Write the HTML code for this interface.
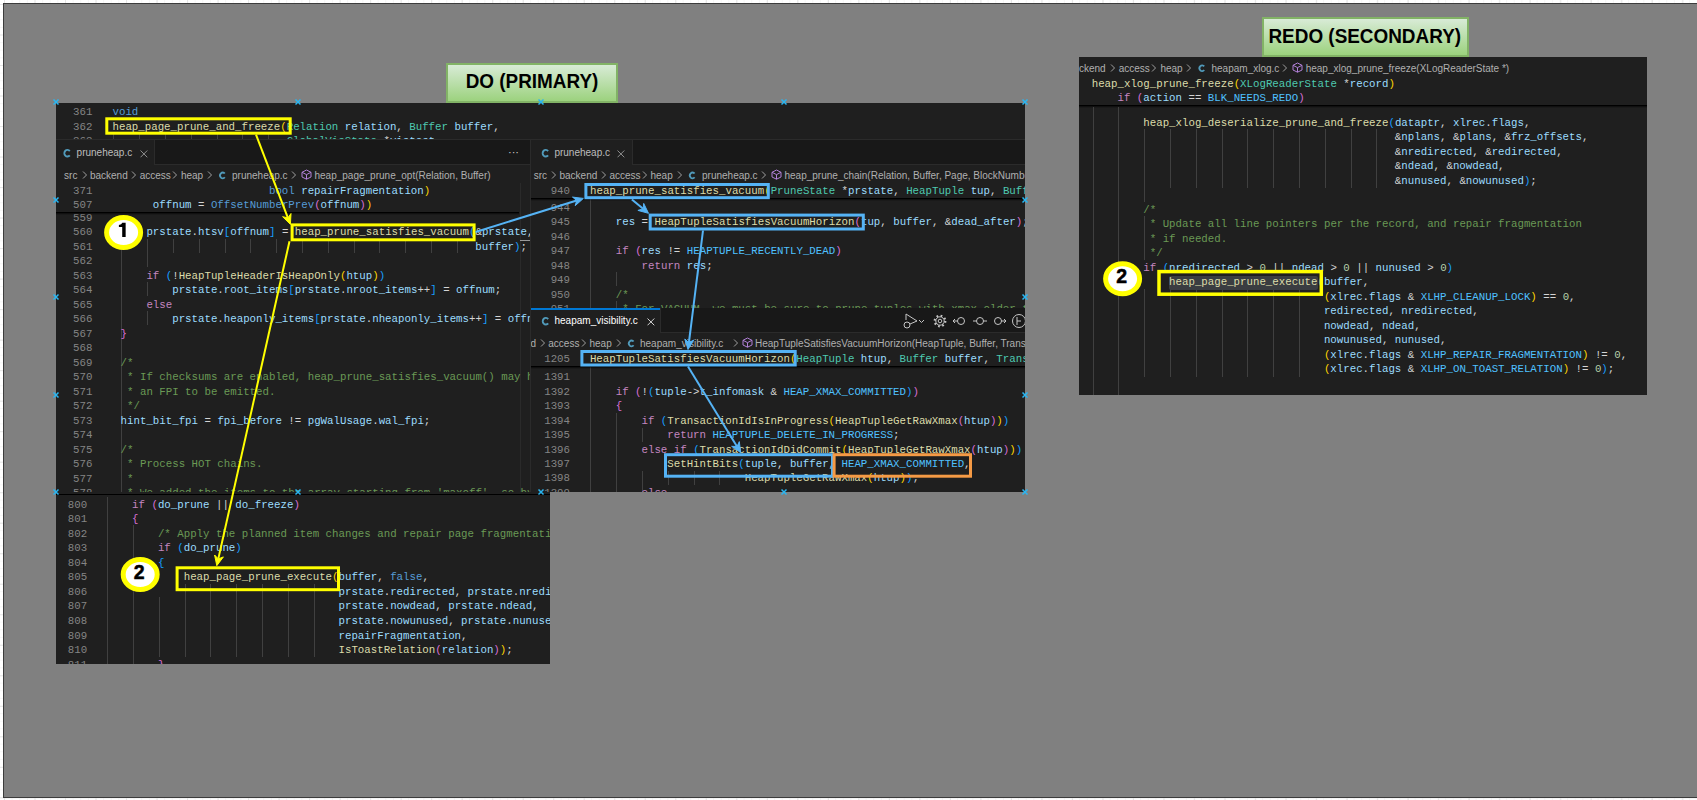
<!DOCTYPE html>
<html><head><meta charset="utf-8"><style>
html,body{margin:0;padding:0;}
body{width:1697px;height:800px;position:relative;overflow:hidden;background-color:#fff;
background-image:linear-gradient(#e6e6e6 1px, transparent 1px),linear-gradient(90deg,#e6e6e6 1px, transparent 1px),linear-gradient(#f6f6f6 1px, transparent 1px),linear-gradient(90deg,#f6f6f6 1px, transparent 1px);
background-size:30.53px 30.53px,30.53px 30.53px,7.63px 7.63px,7.63px 7.63px;background-position:4px 4px,4px 4px,4px 4px,4px 4px;}
.bg{position:absolute;left:3px;top:3px;width:1700px;height:795px;background:#808080;border:1px solid #3c3c3c;box-sizing:border-box;}
.pn{position:absolute;overflow:hidden;}
.cl{position:absolute;white-space:pre;font-family:"Liberation Mono",monospace;font-size:10.75px;line-height:14.5px;height:14.5px;color:#d4d4d4;}
.ln{position:absolute;white-space:pre;font-family:"Liberation Mono",monospace;font-size:10.75px;line-height:14.5px;height:14.5px;color:#858585;text-align:right;}
.ig{position:absolute;width:1px;background:#404040;}
.tx{position:absolute;white-space:pre;font-family:"Liberation Sans",sans-serif;}
.lbl span{display:inline-block;white-space:pre;}
.lbl{position:absolute;box-sizing:border-box;border:2.2px solid #82b366;background:linear-gradient(#d8eBd6,#9cd27e);font-family:"Liberation Sans",sans-serif;font-weight:bold;font-size:19.4px;color:#000;display:flex;align-items:center;justify-content:center;}
svg.ov{position:absolute;left:0;top:0;}
</style></head><body>
<div class="bg"></div>

<div class="lbl" style="left:445.6px;top:63.1px;width:172.5px;height:40.4px"><span style="transform:translateY(-2.1px) scaleX(0.975)">DO (PRIMARY)</span></div>
<div class="lbl" style="left:1261.6px;top:17.3px;width:207.2px;height:39.6px"><span style="transform:translateY(-1.0px) scaleX(0.975)">REDO (SECONDARY)</span></div>

<div class="pn" style="left:56.00px;top:103.00px;width:969.00px;height:37.00px;background:#1f1f1f;">
<div class="ig" style="left:57.30px;top:30.50px;height:6.50px"></div>
<div class="ig" style="left:83.10px;top:30.50px;height:6.50px"></div>
<div class="ig" style="left:108.90px;top:30.50px;height:6.50px"></div>
<div class="ig" style="left:134.70px;top:30.50px;height:6.50px"></div>
<div class="ig" style="left:160.50px;top:30.50px;height:6.50px"></div>
<div class="ig" style="left:186.30px;top:30.50px;height:6.50px"></div>
<div class="ig" style="left:212.10px;top:30.50px;height:6.50px"></div>
<div class="ln" style="left:-3.60px;top:2.25px;width:40px">361</div>
<div class="cl" style="left:56.50px;top:2.25px"><span style="color:#569cd6">void</span></div>
<div class="ln" style="left:-3.60px;top:16.75px;width:40px">362</div>
<div class="cl" style="left:56.50px;top:16.75px"><span style="color:#dcdcaa">heap_page_prune_and_freeze</span><span style="color:#ffd700">(</span><span style="color:#4ec9b0">Relation</span> <span style="color:#9cdcfe">relation</span><span style="color:#d4d4d4">,</span> <span style="color:#4ec9b0">Buffer</span> <span style="color:#9cdcfe">buffer</span><span style="color:#d4d4d4">,</span></div>
<div class="ln" style="left:-3.60px;top:31.25px;width:40px">363</div>
<div class="cl" style="left:230.65px;top:31.25px"><span style="color:#4ec9b0">GlobalVisState</span> <span style="color:#d4d4d4">*</span><span style="color:#9cdcfe">vistest</span><span style="color:#d4d4d4">,</span></div>
<div style="position:absolute;left:0.00px;top:36.00px;width:969.00px;height:1.00px;background:#2b2b2b"></div>
</div>
<div class="pn" style="left:56.00px;top:140.00px;width:474.00px;height:352.00px;background:#1f1f1f;">
<div style="position:absolute;left:0.00px;top:0.00px;width:474.00px;height:25.00px;background:#181818"></div>
<div style="position:absolute;left:0.00px;top:0.00px;width:98.00px;height:25.00px;background:#1f1f1f"></div>
<div style="position:absolute;left:98.00px;top:24.00px;width:376.00px;height:1.00px;background:#2b2b2b"></div>
<div style="position:absolute;left:98.00px;top:0.00px;width:1.00px;height:25.00px;background:#2b2b2b"></div>
<svg style="position:absolute;left:0;top:0;overflow:visible" width="1" height="1"><path d="M13.79 11.05 A3.08 3.35 0 1 0 13.79 15.35" fill="none" stroke="#519aba" stroke-width="1.90"/></svg>
<div class="tx" style="left:20.60px;top:5.80px;height:14px;line-height:14px;color:#bdbdbd;font-size:10px">pruneheap.c</div>
<svg style="position:absolute;left:83.90px;top:9.50px" width="8" height="8" viewBox="0 0 8 8"><path d="M0.5 0.5 L7.3 7.3 M7.3 0.5 L0.5 7.3" stroke="#9a9a9a" stroke-width="0.9"/></svg>
<div class="tx" style="left:452.00px;top:5.00px;height:14px;line-height:14px;color:#cccccc;font-size:11px;letter-spacing:0px">&middot;&middot;&middot;</div>
<div class="tx" style="left:8.10px;top:29.20px;height:14px;line-height:14px;color:#b0b0b0;font-size:10px">src</div>
<svg style="position:absolute;left:25.50px;top:29.90px" width="6" height="10" viewBox="0 0 6 10"><polyline points="1,1.5 4.5,5 1,8.5" fill="none" stroke="#a0a0a0" stroke-width="1"/></svg>
<div class="tx" style="left:33.90px;top:29.20px;height:14px;line-height:14px;color:#b0b0b0;font-size:10px">backend</div>
<svg style="position:absolute;left:74.70px;top:29.90px" width="6" height="10" viewBox="0 0 6 10"><polyline points="1,1.5 4.5,5 1,8.5" fill="none" stroke="#a0a0a0" stroke-width="1"/></svg>
<div class="tx" style="left:83.70px;top:29.20px;height:14px;line-height:14px;color:#b0b0b0;font-size:10px">access</div>
<svg style="position:absolute;left:116.30px;top:29.90px" width="6" height="10" viewBox="0 0 6 10"><polyline points="1,1.5 4.5,5 1,8.5" fill="none" stroke="#a0a0a0" stroke-width="1"/></svg>
<div class="tx" style="left:124.90px;top:29.20px;height:14px;line-height:14px;color:#b0b0b0;font-size:10px">heap</div>
<svg style="position:absolute;left:151.40px;top:29.90px" width="6" height="10" viewBox="0 0 6 10"><polyline points="1,1.5 4.5,5 1,8.5" fill="none" stroke="#a0a0a0" stroke-width="1"/></svg>
<svg style="position:absolute;left:0;top:0;overflow:visible" width="1" height="1"><path d="M168.81 33.54 A2.67 2.90 0 1 0 168.81 37.26" fill="none" stroke="#519aba" stroke-width="1.80"/></svg>
<div class="tx" style="left:176.00px;top:29.20px;height:14px;line-height:14px;color:#b0b0b0;font-size:10px">pruneheap.c</div>
<svg style="position:absolute;left:235.00px;top:29.90px" width="6" height="10" viewBox="0 0 6 10"><polyline points="1,1.5 4.5,5 1,8.5" fill="none" stroke="#a0a0a0" stroke-width="1"/></svg>
<svg style="position:absolute;left:245.00px;top:29.20px" width="11" height="11" viewBox="0 0 11 11"><path d="M5.5 1 L10 3.3 V8 L5.5 10.2 L1 8 V3.3 Z M1 3.3 L5.5 5.6 L10 3.3 M5.5 5.6 V10.2" fill="none" stroke="#b180d7" stroke-width="1"/></svg>
<div class="tx" style="left:258.50px;top:29.20px;height:14px;line-height:14px;color:#b0b0b0;font-size:10px">heap_page_prune_opt(Relation, Buffer)</div>
<div style="position:absolute;left:463.50px;top:43.00px;width:10.50px;height:309.00px;background:#1f1f1f;border-left:1px solid #2a2a2a"></div>
<div style="position:absolute;left:464.00px;top:99.70px;width:10.00px;height:1.20px;background:#9a9a9a"></div>
<div class="ln" style="left:-3.60px;top:43.75px;width:40px">371</div>
<div class="cl" style="left:212.95px;top:43.75px"><span style="color:#569cd6">bool</span> <span style="color:#9cdcfe">repairFragmentation</span><span style="color:#ffd700">)</span></div>
<div class="ln" style="left:-3.60px;top:58.15px;width:40px">507</div>
<div class="cl" style="left:96.85px;top:58.15px"><span style="color:#9cdcfe">offnum</span> <span style="color:#d4d4d4">=</span> <span style="color:#569cd6">OffsetNumberPrev</span><span style="color:#da70d6">(</span><span style="color:#9cdcfe">offnum</span><span style="color:#da70d6">)</span><span style="color:#ffd700">)</span></div>
<div class="ig" style="left:65.40px;top:84.00px;height:268.00px"></div>
<div class="ig" style="left:91.20px;top:98.70px;height:28.30px"></div>
<div class="ig" style="left:117.00px;top:98.70px;height:14.30px"></div>
<div class="ig" style="left:142.80px;top:98.70px;height:14.30px"></div>
<div class="ig" style="left:168.60px;top:98.70px;height:14.30px"></div>
<div class="ig" style="left:194.40px;top:98.70px;height:14.30px"></div>
<div class="ig" style="left:220.20px;top:98.70px;height:14.30px"></div>
<div class="ig" style="left:246.00px;top:98.70px;height:14.30px"></div>
<div class="ig" style="left:271.80px;top:98.70px;height:14.30px"></div>
<div class="ig" style="left:297.60px;top:98.70px;height:14.30px"></div>
<div class="ig" style="left:323.40px;top:98.70px;height:14.30px"></div>
<div class="ig" style="left:349.20px;top:98.70px;height:14.30px"></div>
<div class="ig" style="left:375.00px;top:98.70px;height:14.30px"></div>
<div class="ig" style="left:400.80px;top:98.70px;height:14.30px"></div>
<div class="ig" style="left:91.20px;top:142.00px;height:14.30px"></div>
<div class="ig" style="left:91.20px;top:171.00px;height:14.30px"></div>
<div class="ig" style="left:65.40px;top:84.00px;height:268.00px"></div>
<div class="ln" style="left:-3.60px;top:70.65px;width:40px">559</div>
<div class="ln" style="left:-3.60px;top:85.15px;width:40px">560</div>
<div class="cl" style="left:90.40px;top:85.15px"><span style="color:#9cdcfe">prstate</span><span style="color:#d4d4d4">.</span><span style="color:#9cdcfe">htsv</span><span style="color:#179fff">[</span><span style="color:#9cdcfe">offnum</span><span style="color:#179fff">]</span> <span style="color:#d4d4d4">=</span> <span style="color:#dcdcaa">heap_prune_satisfies_vacuum</span><span style="color:#179fff">(</span><span style="color:#d4d4d4">&amp;</span><span style="color:#9cdcfe">prstate</span><span style="color:#d4d4d4">,</span> <span style="color:#9cdcfe">tup</span><span style="color:#d4d4d4">,</span></div>
<div class="ln" style="left:-3.60px;top:99.65px;width:40px">561</div>
<div class="cl" style="left:419.35px;top:99.65px"><span style="color:#9cdcfe">buffer</span><span style="color:#179fff">)</span><span style="color:#d4d4d4">;</span></div>
<div class="ln" style="left:-3.60px;top:114.15px;width:40px">562</div>
<div class="ln" style="left:-3.60px;top:128.65px;width:40px">563</div>
<div class="cl" style="left:90.40px;top:128.65px"><span style="color:#c586c0">if</span> <span style="color:#179fff">(</span><span style="color:#d4d4d4">!</span><span style="color:#dcdcaa">HeapTupleHeaderIsHeapOnly</span><span style="color:#ffd700">(</span><span style="color:#9cdcfe">htup</span><span style="color:#ffd700">)</span><span style="color:#179fff">)</span></div>
<div class="ln" style="left:-3.60px;top:143.15px;width:40px">564</div>
<div class="cl" style="left:116.20px;top:143.15px"><span style="color:#9cdcfe">prstate</span><span style="color:#d4d4d4">.</span><span style="color:#9cdcfe">root_items</span><span style="color:#179fff">[</span><span style="color:#9cdcfe">prstate</span><span style="color:#d4d4d4">.</span><span style="color:#9cdcfe">nroot_items</span><span style="color:#d4d4d4">++</span><span style="color:#179fff">]</span> <span style="color:#d4d4d4">=</span> <span style="color:#9cdcfe">offnum</span><span style="color:#d4d4d4">;</span></div>
<div class="ln" style="left:-3.60px;top:157.65px;width:40px">565</div>
<div class="cl" style="left:90.40px;top:157.65px"><span style="color:#c586c0">else</span></div>
<div class="ln" style="left:-3.60px;top:172.15px;width:40px">566</div>
<div class="cl" style="left:116.20px;top:172.15px"><span style="color:#9cdcfe">prstate</span><span style="color:#d4d4d4">.</span><span style="color:#9cdcfe">heaponly_items</span><span style="color:#179fff">[</span><span style="color:#9cdcfe">prstate</span><span style="color:#d4d4d4">.</span><span style="color:#9cdcfe">nheaponly_items</span><span style="color:#d4d4d4">++</span><span style="color:#179fff">]</span> <span style="color:#d4d4d4">=</span> <span style="color:#9cdcfe">offnum</span><span style="color:#d4d4d4">;</span></div>
<div class="ln" style="left:-3.60px;top:186.65px;width:40px">567</div>
<div class="cl" style="left:64.60px;top:186.65px"><span style="color:#da70d6">}</span></div>
<div class="ln" style="left:-3.60px;top:201.15px;width:40px">568</div>
<div class="ln" style="left:-3.60px;top:215.65px;width:40px">569</div>
<div class="cl" style="left:64.60px;top:215.65px"><span style="color:#6a9955">/*</span></div>
<div class="ln" style="left:-3.60px;top:230.15px;width:40px">570</div>
<div class="cl" style="left:64.60px;top:230.15px"><span style="color:#6a9955"> * If checksums are enabled, heap_prune_satisfies_vacuum() may hint</span></div>
<div class="ln" style="left:-3.60px;top:244.65px;width:40px">571</div>
<div class="cl" style="left:64.60px;top:244.65px"><span style="color:#6a9955"> * an FPI to be emitted.</span></div>
<div class="ln" style="left:-3.60px;top:259.15px;width:40px">572</div>
<div class="cl" style="left:64.60px;top:259.15px"><span style="color:#6a9955"> */</span></div>
<div class="ln" style="left:-3.60px;top:273.65px;width:40px">573</div>
<div class="cl" style="left:64.60px;top:273.65px"><span style="color:#9cdcfe">hint_bit_fpi</span> <span style="color:#d4d4d4">=</span> <span style="color:#9cdcfe">fpi_before</span> <span style="color:#d4d4d4">!=</span> <span style="color:#9cdcfe">pgWalUsage</span><span style="color:#d4d4d4">.</span><span style="color:#9cdcfe">wal_fpi</span><span style="color:#d4d4d4">;</span></div>
<div class="ln" style="left:-3.60px;top:288.15px;width:40px">574</div>
<div class="ln" style="left:-3.60px;top:302.65px;width:40px">575</div>
<div class="cl" style="left:64.60px;top:302.65px"><span style="color:#6a9955">/*</span></div>
<div class="ln" style="left:-3.60px;top:317.15px;width:40px">576</div>
<div class="cl" style="left:64.60px;top:317.15px"><span style="color:#6a9955"> * Process HOT chains.</span></div>
<div class="ln" style="left:-3.60px;top:331.65px;width:40px">577</div>
<div class="cl" style="left:64.60px;top:331.65px"><span style="color:#6a9955"> *</span></div>
<div class="ln" style="left:-3.60px;top:346.15px;width:40px">578</div>
<div class="cl" style="left:64.60px;top:346.15px"><span style="color:#6a9955"> * We added the items to the array starting from &#x27;maxoff&#x27;, so by</span></div>
<div style="position:absolute;left:0.00px;top:71.50px;width:463.00px;height:1.30px;background:#000"></div>
<div style="position:absolute;left:0.00px;top:72.80px;width:463.00px;height:2.00px;background:linear-gradient(#000a,#0000)"></div>
</div>
<div style="position:absolute;left:530px;top:140px;width:1px;height:352px;background:#2b2b2b"></div>
<div class="pn" style="left:531.00px;top:140.00px;width:494.00px;height:168.00px;background:#1f1f1f;">
<div style="position:absolute;left:0.00px;top:0.00px;width:494.00px;height:25.00px;background:#181818"></div>
<div style="position:absolute;left:0.00px;top:0.00px;width:101.00px;height:25.00px;background:#1f1f1f"></div>
<div style="position:absolute;left:101.00px;top:24.00px;width:393.00px;height:1.00px;background:#2b2b2b"></div>
<div style="position:absolute;left:101.00px;top:0.00px;width:1.00px;height:25.00px;background:#2b2b2b"></div>
<svg style="position:absolute;left:0;top:0;overflow:visible" width="1" height="1"><path d="M17.09 11.05 A3.08 3.35 0 1 0 17.09 15.35" fill="none" stroke="#519aba" stroke-width="1.90"/></svg>
<div class="tx" style="left:23.40px;top:5.80px;height:14px;line-height:14px;color:#bdbdbd;font-size:10px">pruneheap.c</div>
<svg style="position:absolute;left:86.00px;top:9.50px" width="8" height="8" viewBox="0 0 8 8"><path d="M0.5 0.5 L7.3 7.3 M7.3 0.5 L0.5 7.3" stroke="#9a9a9a" stroke-width="0.9"/></svg>
<div class="tx" style="left:2.75px;top:29.20px;height:14px;line-height:14px;color:#b0b0b0;font-size:10px">src</div>
<svg style="position:absolute;left:20.00px;top:29.90px" width="6" height="10" viewBox="0 0 6 10"><polyline points="1,1.5 4.5,5 1,8.5" fill="none" stroke="#a0a0a0" stroke-width="1"/></svg>
<div class="tx" style="left:28.50px;top:29.20px;height:14px;line-height:14px;color:#b0b0b0;font-size:10px">backend</div>
<svg style="position:absolute;left:69.50px;top:29.90px" width="6" height="10" viewBox="0 0 6 10"><polyline points="1,1.5 4.5,5 1,8.5" fill="none" stroke="#a0a0a0" stroke-width="1"/></svg>
<div class="tx" style="left:78.50px;top:29.20px;height:14px;line-height:14px;color:#b0b0b0;font-size:10px">access</div>
<svg style="position:absolute;left:111.00px;top:29.90px" width="6" height="10" viewBox="0 0 6 10"><polyline points="1,1.5 4.5,5 1,8.5" fill="none" stroke="#a0a0a0" stroke-width="1"/></svg>
<div class="tx" style="left:119.50px;top:29.20px;height:14px;line-height:14px;color:#b0b0b0;font-size:10px">heap</div>
<svg style="position:absolute;left:146.00px;top:29.90px" width="6" height="10" viewBox="0 0 6 10"><polyline points="1,1.5 4.5,5 1,8.5" fill="none" stroke="#a0a0a0" stroke-width="1"/></svg>
<svg style="position:absolute;left:0;top:0;overflow:visible" width="1" height="1"><path d="M163.61 33.54 A2.67 2.90 0 1 0 163.61 37.26" fill="none" stroke="#519aba" stroke-width="1.80"/></svg>
<div class="tx" style="left:171.00px;top:29.20px;height:14px;line-height:14px;color:#b0b0b0;font-size:10px">pruneheap.c</div>
<svg style="position:absolute;left:230.00px;top:29.90px" width="6" height="10" viewBox="0 0 6 10"><polyline points="1,1.5 4.5,5 1,8.5" fill="none" stroke="#a0a0a0" stroke-width="1"/></svg>
<svg style="position:absolute;left:240.00px;top:29.20px" width="11" height="11" viewBox="0 0 11 11"><path d="M5.5 1 L10 3.3 V8 L5.5 10.2 L1 8 V3.3 Z M1 3.3 L5.5 5.6 L10 3.3 M5.5 5.6 V10.2" fill="none" stroke="#b180d7" stroke-width="1"/></svg>
<div class="tx" style="left:253.50px;top:29.20px;height:14px;line-height:14px;color:#b0b0b0;font-size:10px">heap_prune_chain(Relation, Buffer, Page, BlockNumber, PruneState *)</div>
<div class="ln" style="left:-1.00px;top:43.75px;width:40px">940</div>
<div class="cl" style="left:59.00px;top:43.75px"><span style="color:#dcdcaa">heap_prune_satisfies_vacuum</span><span style="color:#ffd700">(</span><span style="color:#4ec9b0">PruneState</span> <span style="color:#d4d4d4">*</span><span style="color:#9cdcfe">prstate</span><span style="color:#d4d4d4">,</span> <span style="color:#4ec9b0">HeapTuple</span> <span style="color:#9cdcfe">tup</span><span style="color:#d4d4d4">,</span> <span style="color:#4ec9b0">Buffer</span> <span style="color:#9cdcfe">buffer</span><span style="color:#ffd700">)</span></div>
<div class="ig" style="left:59.30px;top:59.00px;height:109.00px"></div>
<div class="ig" style="left:85.10px;top:131.50px;height:14.50px"></div>
<div class="ig" style="left:85.10px;top:160.50px;height:7.50px"></div>
<div class="ln" style="left:-1.00px;top:60.50px;width:40px">944</div>
<div class="ln" style="left:-1.00px;top:75.00px;width:40px">945</div>
<div class="cl" style="left:84.80px;top:75.00px"><span style="color:#9cdcfe">res</span> <span style="color:#d4d4d4">=</span> <span style="color:#dcdcaa">HeapTupleSatisfiesVacuumHorizon</span><span style="color:#da70d6">(</span><span style="color:#9cdcfe">tup</span><span style="color:#d4d4d4">,</span> <span style="color:#9cdcfe">buffer</span><span style="color:#d4d4d4">,</span> <span style="color:#d4d4d4">&amp;</span><span style="color:#9cdcfe">dead_after</span><span style="color:#da70d6">)</span><span style="color:#d4d4d4">;</span></div>
<div class="ln" style="left:-1.00px;top:89.50px;width:40px">946</div>
<div class="ln" style="left:-1.00px;top:104.00px;width:40px">947</div>
<div class="cl" style="left:84.80px;top:104.00px"><span style="color:#c586c0">if</span> <span style="color:#da70d6">(</span><span style="color:#9cdcfe">res</span> <span style="color:#d4d4d4">!=</span> <span style="color:#4fc1ff">HEAPTUPLE_RECENTLY_DEAD</span><span style="color:#da70d6">)</span></div>
<div class="ln" style="left:-1.00px;top:118.50px;width:40px">948</div>
<div class="cl" style="left:110.60px;top:118.50px"><span style="color:#c586c0">return</span> <span style="color:#9cdcfe">res</span><span style="color:#d4d4d4">;</span></div>
<div class="ln" style="left:-1.00px;top:133.00px;width:40px">949</div>
<div class="ln" style="left:-1.00px;top:147.50px;width:40px">950</div>
<div class="cl" style="left:84.80px;top:147.50px"><span style="color:#6a9955">/*</span></div>
<div class="ln" style="left:-1.00px;top:162.00px;width:40px">951</div>
<div class="cl" style="left:84.80px;top:162.00px"><span style="color:#6a9955"> * For VACUUM, we must be sure to prune tuples with xmax older than</span></div>
<div style="position:absolute;left:0.00px;top:43.00px;width:494.00px;height:15.00px;background:#1f1f1f"></div>
<div class="ln" style="left:-1.00px;top:43.75px;width:40px">940</div>
<div class="cl" style="left:59.00px;top:43.75px"><span style="color:#dcdcaa">heap_prune_satisfies_vacuum</span><span style="color:#ffd700">(</span><span style="color:#4ec9b0">PruneState</span> <span style="color:#d4d4d4">*</span><span style="color:#9cdcfe">prstate</span><span style="color:#d4d4d4">,</span> <span style="color:#4ec9b0">HeapTuple</span> <span style="color:#9cdcfe">tup</span><span style="color:#d4d4d4">,</span> <span style="color:#4ec9b0">Buffer</span> <span style="color:#9cdcfe">buffer</span><span style="color:#ffd700">)</span></div>
<div style="position:absolute;left:0.00px;top:57.50px;width:494.00px;height:1.30px;background:#000"></div>
<div style="position:absolute;left:0.00px;top:58.80px;width:494.00px;height:2.00px;background:linear-gradient(#000a,#0000)"></div>
</div>
<div class="pn" style="left:531.00px;top:308.00px;width:494.00px;height:184.00px;background:#1f1f1f;">
<div style="position:absolute;left:0.00px;top:0.00px;width:494.00px;height:25.00px;background:#181818"></div>
<div style="position:absolute;left:0.00px;top:0.00px;width:129.50px;height:25.00px;background:#1f1f1f"></div>
<div style="position:absolute;left:0.00px;top:0.00px;width:129.50px;height:1.50px;background:#0078d4"></div>
<div style="position:absolute;left:129.50px;top:24.00px;width:364.50px;height:1.00px;background:#2b2b2b"></div>
<div style="position:absolute;left:129.00px;top:0.00px;width:1.00px;height:25.00px;background:#2b2b2b"></div>
<svg style="position:absolute;left:0;top:0;overflow:visible" width="1" height="1"><path d="M17.19 11.05 A3.08 3.35 0 1 0 17.19 15.35" fill="none" stroke="#519aba" stroke-width="1.90"/></svg>
<div class="tx" style="left:23.50px;top:5.80px;height:14px;line-height:14px;color:#ffffff;font-size:10px">heapam_visibility.c</div>
<svg style="position:absolute;left:115.50px;top:9.50px" width="8" height="8" viewBox="0 0 8 8"><path d="M0.5 0.5 L7.3 7.3 M7.3 0.5 L0.5 7.3" stroke="#e8e8e8" stroke-width="0.9"/></svg>
<svg style="position:absolute;left:369.0px;top:3.0px" width="140" height="20" viewBox="0 0 140 20"><g fill="none" stroke="#c5c5c5" stroke-width="1"><path d="M6 3 L17 10 L10 13"/><path d="M6 3 V9"/><circle cx="7" cy="14" r="3"/><polyline points="19,9 21.5,11.5 24,9"/><circle cx="40" cy="10" r="1.8"/><circle cx="40" cy="10" r="4.2"/><circle cx="40" cy="10" r="5.3" stroke-width="2.2" stroke-dasharray="1.7 2.46"/><circle cx="61" cy="10" r="3.5"/><path d="M53 10 L57.5 10 M55 8 L53 10 L55 12"/><circle cx="80" cy="10" r="3.5"/><path d="M73 10 H76.5 M83.5 10 H87"/><circle cx="98" cy="10" r="3.5"/><path d="M101.5 10 H106 M104 8 L106 10 L104 12"/><circle cx="119" cy="10" r="6.5"/><path d="M117 6 V14 M117 10 L121 10"/></g></svg>
<div class="tx" style="left:-0.50px;top:29.20px;height:14px;line-height:14px;color:#b0b0b0;font-size:10px">d</div>
<svg style="position:absolute;left:8.50px;top:29.90px" width="6" height="10" viewBox="0 0 6 10"><polyline points="1,1.5 4.5,5 1,8.5" fill="none" stroke="#a0a0a0" stroke-width="1"/></svg>
<div class="tx" style="left:17.30px;top:29.20px;height:14px;line-height:14px;color:#b0b0b0;font-size:10px">access</div>
<svg style="position:absolute;left:50.00px;top:29.90px" width="6" height="10" viewBox="0 0 6 10"><polyline points="1,1.5 4.5,5 1,8.5" fill="none" stroke="#a0a0a0" stroke-width="1"/></svg>
<div class="tx" style="left:58.50px;top:29.20px;height:14px;line-height:14px;color:#b0b0b0;font-size:10px">heap</div>
<svg style="position:absolute;left:85.00px;top:29.90px" width="6" height="10" viewBox="0 0 6 10"><polyline points="1,1.5 4.5,5 1,8.5" fill="none" stroke="#a0a0a0" stroke-width="1"/></svg>
<svg style="position:absolute;left:0;top:0;overflow:visible" width="1" height="1"><path d="M102.61 33.54 A2.67 2.90 0 1 0 102.61 37.26" fill="none" stroke="#519aba" stroke-width="1.80"/></svg>
<div class="tx" style="left:109.00px;top:29.20px;height:14px;line-height:14px;color:#b0b0b0;font-size:10px">heapam_visibility.c</div>
<svg style="position:absolute;left:201.50px;top:29.90px" width="6" height="10" viewBox="0 0 6 10"><polyline points="1,1.5 4.5,5 1,8.5" fill="none" stroke="#a0a0a0" stroke-width="1"/></svg>
<svg style="position:absolute;left:210.50px;top:29.20px" width="11" height="11" viewBox="0 0 11 11"><path d="M5.5 1 L10 3.3 V8 L5.5 10.2 L1 8 V3.3 Z M1 3.3 L5.5 5.6 L10 3.3 M5.5 5.6 V10.2" fill="none" stroke="#b180d7" stroke-width="1"/></svg>
<div class="tx" style="left:224.00px;top:29.20px;height:14px;line-height:14px;color:#b0b0b0;font-size:10px">HeapTupleSatisfiesVacuumHorizon(HeapTuple, Buffer, TransactionId *)</div>
<div class="ig" style="left:59.30px;top:59.00px;height:125.00px"></div>
<div class="ig" style="left:85.10px;top:105.00px;height:79.00px"></div>
<div class="ig" style="left:110.90px;top:119.50px;height:14.50px"></div>
<div class="ig" style="left:110.90px;top:163.00px;height:21.00px"></div>
<div class="ig" style="left:136.70px;top:163.00px;height:14.00px"></div>
<div class="ig" style="left:162.50px;top:163.00px;height:14.00px"></div>
<div class="ig" style="left:188.30px;top:163.00px;height:14.00px"></div>
<div class="ln" style="left:-1.00px;top:62.30px;width:40px">1391</div>
<div class="ln" style="left:-1.00px;top:76.75px;width:40px">1392</div>
<div class="cl" style="left:84.70px;top:76.75px"><span style="color:#c586c0">if</span> <span style="color:#da70d6">(</span><span style="color:#d4d4d4">!</span><span style="color:#179fff">(</span><span style="color:#9cdcfe">tuple</span><span style="color:#d4d4d4">-&gt;</span><span style="color:#9cdcfe">t_infomask</span> <span style="color:#d4d4d4">&amp;</span> <span style="color:#4fc1ff">HEAP_XMAX_COMMITTED</span><span style="color:#179fff">)</span><span style="color:#da70d6">)</span></div>
<div class="ln" style="left:-1.00px;top:91.20px;width:40px">1393</div>
<div class="cl" style="left:84.70px;top:91.20px"><span style="color:#da70d6">{</span></div>
<div class="ln" style="left:-1.00px;top:105.65px;width:40px">1394</div>
<div class="cl" style="left:110.50px;top:105.65px"><span style="color:#c586c0">if</span> <span style="color:#179fff">(</span><span style="color:#dcdcaa">TransactionIdIsInProgress</span><span style="color:#ffd700">(</span><span style="color:#dcdcaa">HeapTupleGetRawXmax</span><span style="color:#da70d6">(</span><span style="color:#9cdcfe">htup</span><span style="color:#da70d6">)</span><span style="color:#ffd700">)</span><span style="color:#179fff">)</span></div>
<div class="ln" style="left:-1.00px;top:120.10px;width:40px">1395</div>
<div class="cl" style="left:136.30px;top:120.10px"><span style="color:#c586c0">return</span> <span style="color:#4fc1ff">HEAPTUPLE_DELETE_IN_PROGRESS</span><span style="color:#d4d4d4">;</span></div>
<div class="ln" style="left:-1.00px;top:134.55px;width:40px">1396</div>
<div class="cl" style="left:110.50px;top:134.55px"><span style="color:#c586c0">else</span> <span style="color:#c586c0">if</span> <span style="color:#179fff">(</span><span style="color:#dcdcaa">TransactionIdDidCommit</span><span style="color:#ffd700">(</span><span style="color:#dcdcaa">HeapTupleGetRawXmax</span><span style="color:#da70d6">(</span><span style="color:#9cdcfe">htup</span><span style="color:#da70d6">)</span><span style="color:#ffd700">)</span><span style="color:#179fff">)</span></div>
<div class="ln" style="left:-1.00px;top:149.00px;width:40px">1397</div>
<div class="cl" style="left:136.30px;top:149.00px"><span style="color:#dcdcaa">SetHintBits</span><span style="color:#179fff">(</span><span style="color:#9cdcfe">tuple</span><span style="color:#d4d4d4">,</span> <span style="color:#9cdcfe">buffer</span><span style="color:#d4d4d4">,</span> <span style="color:#4fc1ff">HEAP_XMAX_COMMITTED</span><span style="color:#d4d4d4">,</span></div>
<div class="ln" style="left:-1.00px;top:163.45px;width:40px">1398</div>
<div class="cl" style="left:213.70px;top:163.45px"><span style="color:#dcdcaa">HeapTupleGetRawXmax</span><span style="color:#ffd700">(</span><span style="color:#9cdcfe">htup</span><span style="color:#ffd700">)</span><span style="color:#179fff">)</span><span style="color:#d4d4d4">;</span></div>
<div class="ln" style="left:-1.00px;top:177.90px;width:40px">1399</div>
<div class="cl" style="left:110.50px;top:177.90px"><span style="color:#c586c0">else</span></div>
<div style="position:absolute;left:0.00px;top:43.00px;width:494.00px;height:15.00px;background:#1f1f1f"></div>
<div class="ln" style="left:-1.00px;top:43.95px;width:40px">1205</div>
<div class="cl" style="left:58.90px;top:43.95px"><span style="color:#dcdcaa">HeapTupleSatisfiesVacuumHorizon</span><span style="color:#ffd700">(</span><span style="color:#4ec9b0">HeapTuple</span> <span style="color:#9cdcfe">htup</span><span style="color:#d4d4d4">,</span> <span style="color:#4ec9b0">Buffer</span> <span style="color:#9cdcfe">buffer</span><span style="color:#d4d4d4">,</span> <span style="color:#4ec9b0">TransactionId</span> <span style="color:#d4d4d4">*</span><span style="color:#9cdcfe">dead_after</span><span style="color:#ffd700">)</span></div>
<div style="position:absolute;left:0.00px;top:58.00px;width:494.00px;height:1.30px;background:#000"></div>
<div style="position:absolute;left:0.00px;top:59.30px;width:494.00px;height:2.00px;background:linear-gradient(#000a,#0000)"></div>
</div>
<div class="pn" style="left:56.00px;top:492.00px;width:494.00px;height:172.00px;background:#1f1f1f;">
<div style="position:absolute;left:0.00px;top:2.00px;width:494.00px;height:1.40px;background:#000"></div>
<div class="ig" style="left:51.10px;top:5.00px;height:167.00px"></div>
<div class="ig" style="left:76.90px;top:33.00px;height:139.00px"></div>
<div class="ig" style="left:102.70px;top:105.00px;height:60.00px"></div>
<div class="ig" style="left:128.50px;top:92.00px;height:73.00px"></div>
<div class="ig" style="left:154.30px;top:92.00px;height:73.00px"></div>
<div class="ig" style="left:180.10px;top:92.00px;height:73.00px"></div>
<div class="ig" style="left:205.90px;top:92.00px;height:73.00px"></div>
<div class="ig" style="left:231.70px;top:92.00px;height:73.00px"></div>
<div class="ig" style="left:257.50px;top:92.00px;height:73.00px"></div>
<div class="ln" style="left:-8.80px;top:5.75px;width:40px">800</div>
<div class="cl" style="left:76.10px;top:5.75px"><span style="color:#c586c0">if</span> <span style="color:#da70d6">(</span><span style="color:#9cdcfe">do_prune</span> <span style="color:#d4d4d4">||</span> <span style="color:#9cdcfe">do_freeze</span><span style="color:#da70d6">)</span></div>
<div class="ln" style="left:-8.80px;top:20.28px;width:40px">801</div>
<div class="cl" style="left:76.10px;top:20.28px"><span style="color:#da70d6">{</span></div>
<div class="ln" style="left:-8.80px;top:34.81px;width:40px">802</div>
<div class="cl" style="left:101.90px;top:34.81px"><span style="color:#6a9955">/* Apply the planned item changes and repair page fragmentation, then mark</span></div>
<div class="ln" style="left:-8.80px;top:49.34px;width:40px">803</div>
<div class="cl" style="left:101.90px;top:49.34px"><span style="color:#c586c0">if</span> <span style="color:#179fff">(</span><span style="color:#9cdcfe">do_prune</span><span style="color:#179fff">)</span></div>
<div class="ln" style="left:-8.80px;top:63.87px;width:40px">804</div>
<div class="cl" style="left:101.90px;top:63.87px"><span style="color:#179fff">{</span></div>
<div class="ln" style="left:-8.80px;top:78.40px;width:40px">805</div>
<div class="cl" style="left:127.70px;top:78.40px"><span style="color:#dcdcaa">heap_page_prune_execute</span><span style="color:#ffd700">(</span><span style="color:#9cdcfe">buffer</span><span style="color:#d4d4d4">,</span> <span style="color:#569cd6">false</span><span style="color:#d4d4d4">,</span></div>
<div class="ln" style="left:-8.80px;top:92.93px;width:40px">806</div>
<div class="cl" style="left:282.50px;top:92.93px"><span style="color:#9cdcfe">prstate</span><span style="color:#d4d4d4">.</span><span style="color:#9cdcfe">redirected</span><span style="color:#d4d4d4">,</span> <span style="color:#9cdcfe">prstate</span><span style="color:#d4d4d4">.</span><span style="color:#9cdcfe">nredirected</span><span style="color:#d4d4d4">,</span></div>
<div class="ln" style="left:-8.80px;top:107.46px;width:40px">807</div>
<div class="cl" style="left:282.50px;top:107.46px"><span style="color:#9cdcfe">prstate</span><span style="color:#d4d4d4">.</span><span style="color:#9cdcfe">nowdead</span><span style="color:#d4d4d4">,</span> <span style="color:#9cdcfe">prstate</span><span style="color:#d4d4d4">.</span><span style="color:#9cdcfe">ndead</span><span style="color:#d4d4d4">,</span></div>
<div class="ln" style="left:-8.80px;top:121.99px;width:40px">808</div>
<div class="cl" style="left:282.50px;top:121.99px"><span style="color:#9cdcfe">prstate</span><span style="color:#d4d4d4">.</span><span style="color:#9cdcfe">nowunused</span><span style="color:#d4d4d4">,</span> <span style="color:#9cdcfe">prstate</span><span style="color:#d4d4d4">.</span><span style="color:#9cdcfe">nunused</span><span style="color:#d4d4d4">,</span></div>
<div class="ln" style="left:-8.80px;top:136.52px;width:40px">809</div>
<div class="cl" style="left:282.50px;top:136.52px"><span style="color:#9cdcfe">repairFragmentation</span><span style="color:#d4d4d4">,</span></div>
<div class="ln" style="left:-8.80px;top:151.05px;width:40px">810</div>
<div class="cl" style="left:282.50px;top:151.05px"><span style="color:#dcdcaa">IsToastRelation</span><span style="color:#da70d6">(</span><span style="color:#9cdcfe">relation</span><span style="color:#da70d6">)</span><span style="color:#ffd700">)</span><span style="color:#d4d4d4">;</span></div>
<div class="ln" style="left:-8.80px;top:165.58px;width:40px">811</div>
<div class="cl" style="left:101.90px;top:165.58px"><span style="color:#da70d6">}</span></div>
</div>
<div class="pn" style="left:1079.00px;top:57.00px;width:568.00px;height:337.50px;background:#1f1f1f;">
<div class="tx" style="left:0.00px;top:5.00px;height:14px;line-height:14px;color:#b0b0b0;font-size:10px">ckend</div>
<svg style="position:absolute;left:30.50px;top:5.70px" width="6" height="10" viewBox="0 0 6 10"><polyline points="1,1.5 4.5,5 1,8.5" fill="none" stroke="#a0a0a0" stroke-width="1"/></svg>
<div class="tx" style="left:39.70px;top:5.00px;height:14px;line-height:14px;color:#b0b0b0;font-size:10px">access</div>
<svg style="position:absolute;left:71.50px;top:5.70px" width="6" height="10" viewBox="0 0 6 10"><polyline points="1,1.5 4.5,5 1,8.5" fill="none" stroke="#a0a0a0" stroke-width="1"/></svg>
<div class="tx" style="left:81.40px;top:5.00px;height:14px;line-height:14px;color:#b0b0b0;font-size:10px">heap</div>
<svg style="position:absolute;left:107.00px;top:5.70px" width="6" height="10" viewBox="0 0 6 10"><polyline points="1,1.5 4.5,5 1,8.5" fill="none" stroke="#a0a0a0" stroke-width="1"/></svg>
<svg style="position:absolute;left:0;top:0;overflow:visible" width="1" height="1"><path d="M125.21 9.34 A2.67 2.90 0 1 0 125.21 13.06" fill="none" stroke="#519aba" stroke-width="1.80"/></svg>
<div class="tx" style="left:132.50px;top:5.00px;height:14px;line-height:14px;color:#b0b0b0;font-size:10px">heapam_xlog.c</div>
<svg style="position:absolute;left:203.00px;top:5.70px" width="6" height="10" viewBox="0 0 6 10"><polyline points="1,1.5 4.5,5 1,8.5" fill="none" stroke="#a0a0a0" stroke-width="1"/></svg>
<svg style="position:absolute;left:213.00px;top:5.00px" width="11" height="11" viewBox="0 0 11 11"><path d="M5.5 1 L10 3.3 V8 L5.5 10.2 L1 8 V3.3 Z M1 3.3 L5.5 5.6 L10 3.3 M5.5 5.6 V10.2" fill="none" stroke="#b180d7" stroke-width="1"/></svg>
<div class="tx" style="left:226.70px;top:5.00px;height:14px;line-height:14px;color:#b0b0b0;font-size:10px">heap_xlog_prune_freeze(XLogReaderState *)</div>
<div class="cl" style="left:12.70px;top:19.75px"><span style="color:#dcdcaa">heap_xlog_prune_freeze</span><span style="color:#ffd700">(</span><span style="color:#4ec9b0">XLogReaderState</span> <span style="color:#d4d4d4">*</span><span style="color:#9cdcfe">record</span><span style="color:#ffd700">)</span></div>
<div class="cl" style="left:38.50px;top:33.75px"><span style="color:#c586c0">if</span> <span style="color:#da70d6">(</span><span style="color:#9cdcfe">action</span> <span style="color:#d4d4d4">==</span> <span style="color:#4fc1ff">BLK_NEEDS_REDO</span><span style="color:#da70d6">)</span></div>
<div style="position:absolute;left:0.00px;top:47.50px;width:568.00px;height:1.30px;background:#000"></div>
<div style="position:absolute;left:0.00px;top:48.80px;width:568.00px;height:2.00px;background:linear-gradient(#000a,#0000)"></div>
<div class="ig" style="left:13.50px;top:50.00px;height:287.50px"></div>
<div class="ig" style="left:39.30px;top:50.00px;height:287.50px"></div>
<div class="ig" style="left:65.10px;top:72.00px;height:73.00px"></div>
<div class="ig" style="left:90.90px;top:72.00px;height:59.00px"></div>
<div class="ig" style="left:116.70px;top:72.00px;height:59.00px"></div>
<div class="ig" style="left:142.50px;top:72.00px;height:59.00px"></div>
<div class="ig" style="left:168.30px;top:72.00px;height:59.00px"></div>
<div class="ig" style="left:194.10px;top:72.00px;height:59.00px"></div>
<div class="ig" style="left:219.90px;top:72.00px;height:59.00px"></div>
<div class="ig" style="left:245.70px;top:72.00px;height:59.00px"></div>
<div class="ig" style="left:271.50px;top:72.00px;height:59.00px"></div>
<div class="ig" style="left:297.30px;top:72.00px;height:59.00px"></div>
<div class="ig" style="left:65.10px;top:159.00px;height:44.00px"></div>
<div class="ig" style="left:65.10px;top:232.00px;height:88.00px"></div>
<div class="ig" style="left:90.90px;top:232.00px;height:88.00px"></div>
<div class="ig" style="left:116.70px;top:232.00px;height:88.00px"></div>
<div class="ig" style="left:142.50px;top:232.00px;height:88.00px"></div>
<div class="ig" style="left:168.30px;top:232.00px;height:88.00px"></div>
<div class="ig" style="left:194.10px;top:232.00px;height:88.00px"></div>
<div class="ig" style="left:219.90px;top:232.00px;height:88.00px"></div>
<div class="cl" style="left:64.30px;top:58.75px"><span style="color:#dcdcaa">heap_xlog_deserialize_prune_and_freeze</span><span style="color:#179fff">(</span><span style="color:#9cdcfe">dataptr</span><span style="color:#d4d4d4">,</span> <span style="color:#9cdcfe">xlrec</span><span style="color:#d4d4d4">.</span><span style="color:#9cdcfe">flags</span><span style="color:#d4d4d4">,</span></div>
<div class="cl" style="left:315.85px;top:73.25px"><span style="color:#d4d4d4">&amp;</span><span style="color:#9cdcfe">nplans</span><span style="color:#d4d4d4">,</span> <span style="color:#d4d4d4">&amp;</span><span style="color:#9cdcfe">plans</span><span style="color:#d4d4d4">,</span> <span style="color:#d4d4d4">&amp;</span><span style="color:#9cdcfe">frz_offsets</span><span style="color:#d4d4d4">,</span></div>
<div class="cl" style="left:315.85px;top:87.75px"><span style="color:#d4d4d4">&amp;</span><span style="color:#9cdcfe">nredirected</span><span style="color:#d4d4d4">,</span> <span style="color:#d4d4d4">&amp;</span><span style="color:#9cdcfe">redirected</span><span style="color:#d4d4d4">,</span></div>
<div class="cl" style="left:315.85px;top:102.25px"><span style="color:#d4d4d4">&amp;</span><span style="color:#9cdcfe">ndead</span><span style="color:#d4d4d4">,</span> <span style="color:#d4d4d4">&amp;</span><span style="color:#9cdcfe">nowdead</span><span style="color:#d4d4d4">,</span></div>
<div class="cl" style="left:315.85px;top:116.75px"><span style="color:#d4d4d4">&amp;</span><span style="color:#9cdcfe">nunused</span><span style="color:#d4d4d4">,</span> <span style="color:#d4d4d4">&amp;</span><span style="color:#9cdcfe">nowunused</span><span style="color:#179fff">)</span><span style="color:#d4d4d4">;</span></div>
<div class="cl" style="left:64.30px;top:145.75px"><span style="color:#6a9955">/*</span></div>
<div class="cl" style="left:64.30px;top:160.25px"><span style="color:#6a9955"> * Update all line pointers per the record, and repair fragmentation</span></div>
<div class="cl" style="left:64.30px;top:174.75px"><span style="color:#6a9955"> * if needed.</span></div>
<div class="cl" style="left:64.30px;top:189.25px"><span style="color:#6a9955"> */</span></div>
<div class="cl" style="left:64.30px;top:203.75px"><span style="color:#c586c0">if</span> <span style="color:#179fff">(</span><span style="color:#9cdcfe">nredirected</span> <span style="color:#d4d4d4">&gt;</span> <span style="color:#b5cea8">0</span> <span style="color:#d4d4d4">||</span> <span style="color:#9cdcfe">ndead</span> <span style="color:#d4d4d4">&gt;</span> <span style="color:#b5cea8">0</span> <span style="color:#d4d4d4">||</span> <span style="color:#9cdcfe">nunused</span> <span style="color:#d4d4d4">&gt;</span> <span style="color:#b5cea8">0</span><span style="color:#179fff">)</span></div>
<div style="position:absolute;left:90.00px;top:218.50px;width:148.80px;height:14.20px;background:#3a3d41;border-radius:2px"></div>
<div class="cl" style="left:90.10px;top:218.25px"><span style="color:#dcdcaa">heap_page_prune_execute</span><span style="color:#179fff">(</span><span style="color:#9cdcfe">buffer</span><span style="color:#d4d4d4">,</span></div>
<div class="cl" style="left:244.90px;top:232.75px"><span style="color:#ffd700">(</span><span style="color:#9cdcfe">xlrec</span><span style="color:#d4d4d4">.</span><span style="color:#9cdcfe">flags</span> <span style="color:#d4d4d4">&amp;</span> <span style="color:#4fc1ff">XLHP_CLEANUP_LOCK</span><span style="color:#ffd700">)</span> <span style="color:#d4d4d4">==</span> <span style="color:#b5cea8">0</span><span style="color:#d4d4d4">,</span></div>
<div class="cl" style="left:244.90px;top:247.25px"><span style="color:#9cdcfe">redirected</span><span style="color:#d4d4d4">,</span> <span style="color:#9cdcfe">nredirected</span><span style="color:#d4d4d4">,</span></div>
<div class="cl" style="left:244.90px;top:261.75px"><span style="color:#9cdcfe">nowdead</span><span style="color:#d4d4d4">,</span> <span style="color:#9cdcfe">ndead</span><span style="color:#d4d4d4">,</span></div>
<div class="cl" style="left:244.90px;top:276.25px"><span style="color:#9cdcfe">nowunused</span><span style="color:#d4d4d4">,</span> <span style="color:#9cdcfe">nunused</span><span style="color:#d4d4d4">,</span></div>
<div class="cl" style="left:244.90px;top:290.75px"><span style="color:#ffd700">(</span><span style="color:#9cdcfe">xlrec</span><span style="color:#d4d4d4">.</span><span style="color:#9cdcfe">flags</span> <span style="color:#d4d4d4">&amp;</span> <span style="color:#4fc1ff">XLHP_REPAIR_FRAGMENTATION</span><span style="color:#ffd700">)</span> <span style="color:#d4d4d4">!=</span> <span style="color:#b5cea8">0</span><span style="color:#d4d4d4">,</span></div>
<div class="cl" style="left:244.90px;top:305.25px"><span style="color:#ffd700">(</span><span style="color:#9cdcfe">xlrec</span><span style="color:#d4d4d4">.</span><span style="color:#9cdcfe">flags</span> <span style="color:#d4d4d4">&amp;</span> <span style="color:#4fc1ff">XLHP_ON_TOAST_RELATION</span><span style="color:#ffd700">)</span> <span style="color:#d4d4d4">!=</span> <span style="color:#b5cea8">0</span><span style="color:#179fff">)</span><span style="color:#d4d4d4">;</span></div>
</div>
<svg class="ov" width="1697" height="800" viewBox="0 0 1697 800"><rect x="106.8" y="118.8" width="183.4" height="14.4" fill="none" stroke="#ffff00" stroke-width="3"/>
<rect x="292.1" y="224.9" width="182.0" height="14.9" fill="none" stroke="#ffff00" stroke-width="3"/>
<rect x="177.1" y="567.8" width="161.4" height="21.9" fill="none" stroke="#ffff00" stroke-width="3"/>
<rect x="1159.0" y="271.6" width="162.3" height="22.6" fill="none" stroke="#ffff00" stroke-width="3.5"/>
<rect x="585.9" y="184.5" width="182.4" height="13.2" fill="none" stroke="#55b3f5" stroke-width="3"/>
<rect x="650.2" y="215.1" width="213.1" height="13.9" fill="none" stroke="#55b3f5" stroke-width="3"/>
<rect x="581.9" y="351.5" width="213.3" height="13.5" fill="none" stroke="#55b3f5" stroke-width="3"/>
<rect x="665.5" y="454.7" width="167.0" height="21.5" fill="none" stroke="#55b3f5" stroke-width="3"/>
<rect x="834.1" y="454.7" width="136.4" height="21.5" fill="none" stroke="#f59a45" stroke-width="3"/>
<line x1="256.0" y1="134.7" x2="287.9" y2="217.9" stroke="#ffff00" stroke-width="2"/>
<path d="M290.4 224.4 L282.6 216.7 L287.9 217.9 L291.0 213.5 Z" fill="#ffff00" stroke="#ffff00" stroke-width="1"/>
<line x1="289.5" y1="241.3" x2="218.3" y2="558.9" stroke="#ffff00" stroke-width="2"/>
<path d="M216.8 565.7 L214.6 555.0 L218.3 558.9 L223.4 556.9 Z" fill="#ffff00" stroke="#ffff00" stroke-width="1"/>
<line x1="475.6" y1="232.0" x2="576.7" y2="200.5" stroke="#55b3f5" stroke-width="2"/>
<path d="M583.4 198.4 L575.2 205.7 L576.7 200.5 L572.5 197.1 Z" fill="#55b3f5" stroke="#55b3f5" stroke-width="1"/>
<line x1="631.9" y1="199.5" x2="643.1" y2="208.8" stroke="#55b3f5" stroke-width="2"/>
<path d="M648.5 213.3 L637.9 210.4 L643.1 208.8 L643.7 203.4 Z" fill="#55b3f5" stroke="#55b3f5" stroke-width="1"/>
<line x1="703.0" y1="230.5" x2="688.9" y2="342.6" stroke="#55b3f5" stroke-width="2"/>
<path d="M688.0 349.5 L684.8 339.0 L688.9 342.6 L693.7 340.1 Z" fill="#55b3f5" stroke="#55b3f5" stroke-width="1"/>
<line x1="688.0" y1="366.5" x2="737.0" y2="446.5" stroke="#55b3f5" stroke-width="2"/>
<path d="M740.7 452.5 L731.6 446.3 L737.0 446.5 L739.3 441.6 Z" fill="#55b3f5" stroke="#55b3f5" stroke-width="1"/>
<ellipse cx="123.6" cy="232.4" rx="17.0" ry="15.0" fill="#ffffff" stroke="#ffff00" stroke-width="5"/>
<path d="M125.65 222.85 L125.65 236.9 L122.2 236.9 L122.2 227.0 L118.9 227.0 L118.9 224.9 Q121.6 224.6 122.3 222.85 Z" fill="#000"/>
<ellipse cx="140.2" cy="574.6" rx="17.0" ry="15.0" fill="#ffffff" stroke="#ffff00" stroke-width="5"/>
<text x="139.3" y="578.9" text-anchor="middle" font-family="Liberation Sans" font-weight="bold" font-size="19.5" fill="#000" stroke="#000" stroke-width="0.5">2</text>
<ellipse cx="1122.6" cy="278.7" rx="17.0" ry="15.0" fill="#ffffff" stroke="#ffff00" stroke-width="5"/>
<text x="1121.7" y="283.0" text-anchor="middle" font-family="Liberation Sans" font-weight="bold" font-size="19.5" fill="#000" stroke="#000" stroke-width="0.5">2</text>
<path d="M53.5 99.5 l5 5 M58.5 99.5 l-5 5" stroke="#29b6f2" stroke-width="1.5"/>
<path d="M295.5 99.5 l5 5 M300.5 99.5 l-5 5" stroke="#29b6f2" stroke-width="1.5"/>
<path d="M538.5 99.5 l5 5 M543.5 99.5 l-5 5" stroke="#29b6f2" stroke-width="1.5"/>
<path d="M781.5 99.5 l5 5 M786.5 99.5 l-5 5" stroke="#29b6f2" stroke-width="1.5"/>
<path d="M1022.5 99.5 l5 5 M1027.5 99.5 l-5 5" stroke="#29b6f2" stroke-width="1.5"/>
<path d="M53.5 197.5 l5 5 M58.5 197.5 l-5 5" stroke="#29b6f2" stroke-width="1.5"/>
<path d="M53.5 294.5 l5 5 M58.5 294.5 l-5 5" stroke="#29b6f2" stroke-width="1.5"/>
<path d="M53.5 392.5 l5 5 M58.5 392.5 l-5 5" stroke="#29b6f2" stroke-width="1.5"/>
<path d="M53.5 489.5 l5 5 M58.5 489.5 l-5 5" stroke="#29b6f2" stroke-width="1.5"/>
<path d="M295.5 489.5 l5 5 M300.5 489.5 l-5 5" stroke="#29b6f2" stroke-width="1.5"/>
<path d="M538.5 489.5 l5 5 M543.5 489.5 l-5 5" stroke="#29b6f2" stroke-width="1.5"/>
<path d="M781.5 489.5 l5 5 M786.5 489.5 l-5 5" stroke="#29b6f2" stroke-width="1.5"/>
<path d="M1022.5 489.5 l5 5 M1027.5 489.5 l-5 5" stroke="#29b6f2" stroke-width="1.5"/>
<path d="M1022.5 197.5 l5 5 M1027.5 197.5 l-5 5" stroke="#29b6f2" stroke-width="1.5"/>
<path d="M1022.5 294.5 l5 5 M1027.5 294.5 l-5 5" stroke="#29b6f2" stroke-width="1.5"/>
<path d="M1022.5 392.5 l5 5 M1027.5 392.5 l-5 5" stroke="#29b6f2" stroke-width="1.5"/></svg>
</body></html>
